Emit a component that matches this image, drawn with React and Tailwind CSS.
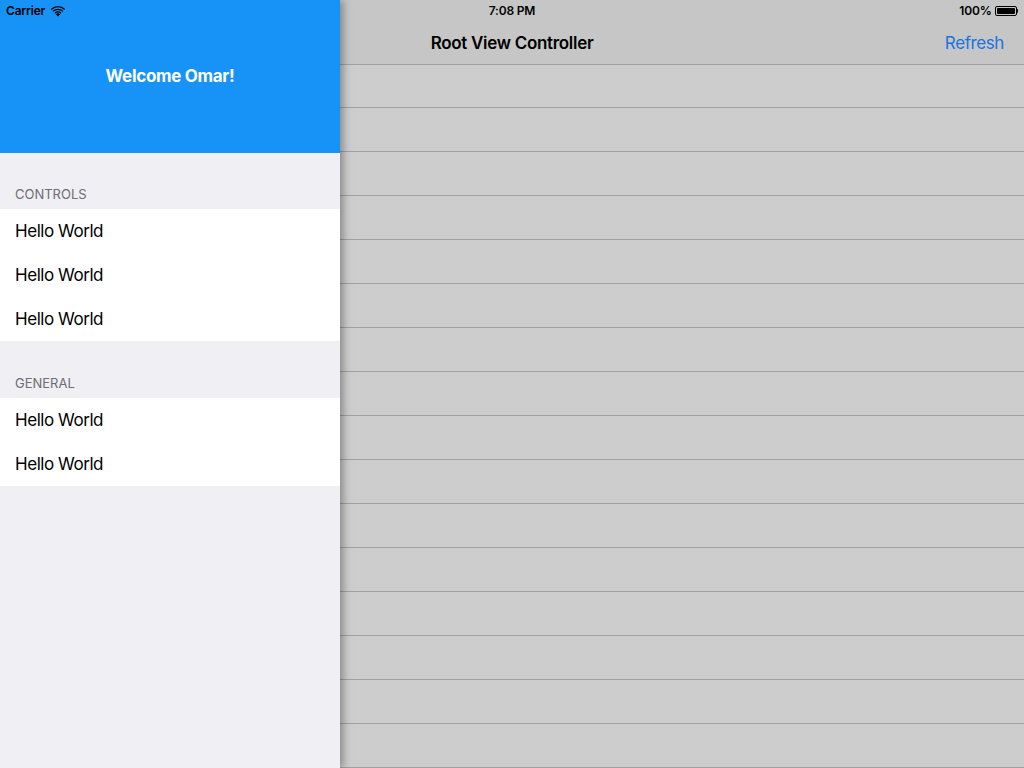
import React from 'react';

// Side drawer over a plain table view, iPad style
const font = { fontFamily: 'Inter, "Noto Sans", "Liberation Sans", sans-serif' };

function WifiIcon() {
  return (
    <svg width="14" height="11" viewBox="0 0 14 11" className="block">
      <path d="M7 10.5 L4.9 8.3 A3 3 0 0 1 9.1 8.3 Z" fill="#000" />
      <path d="M3.5 6.8 A5 5 0 0 1 10.5 6.8 L9.6 7.7 A3.8 3.8 0 0 0 4.4 7.7 Z" fill="#000" />
      <path d="M1.6 4.9 A7.7 7.7 0 0 1 12.4 4.9 L11.5 5.8 A6.4 6.4 0 0 0 2.5 5.8 Z" fill="#000" />
      <path d="M-0.2 3 A10.3 10.3 0 0 1 14.2 3 L13.3 3.9 A9 9 0 0 0 0.7 3.9 Z" fill="#000" />
    </svg>
  );
}

function Battery() {
  return (
    <div className="flex items-center">
      <div className="w-[22px] h-[10px] rounded-[2px] border border-black p-[1px]">
        <div className="w-full h-full bg-black rounded-[1px]" />
      </div>
      <div className="w-[1.5px] h-[4px] bg-black rounded-r-sm" />
    </div>
  );
}

function StatusBar() {
  return (
    <div className="absolute top-0 left-0 right-0 h-[20px] z-20 flex items-center justify-between px-[6px] pt-[2px] text-[12px] font-semibold text-black tracking-[-0.2px]">
      <div className="flex items-center gap-[6px] w-[200px]">
        <span>Carrier</span>
        <WifiIcon />
      </div>
      <span>7:08 PM</span>
      <div className="flex items-center justify-end gap-[3px] w-[200px]">
        <span>100%</span>
        <Battery />
      </div>
    </div>
  );
}

function MainView() {
  const rows = Array.from({ length: 16 });
  return (
    <div className="w-full h-full bg-[#cdcdcd] flex flex-col">
      <div className="h-[65px] shrink-0 bg-[#c6c6c6] border-b border-[#a1a1a1] pt-[23px] flex items-center relative">
        <div className="flex-1 text-center text-[17px] font-semibold text-black tracking-[-0.3px]">Root View Controller</div>
        <div className="absolute right-[20px] top-[23px] h-[41px] flex items-center text-[17px] text-[#1a74dc] tracking-[-0.4px]">Refresh</div>
      </div>
      <div className="h-[43px] shrink-0 border-b border-[#a1a1a1]" />
      {rows.map((_, i) => (
        <div key={i} className="h-[44px] shrink-0 border-b border-[#a1a1a1]" />
      ))}
    </div>
  );
}

function Section({ title, items, gap }) {
  return (
    <div>
      <div className={`${gap} flex items-end px-[15px] pb-[5px] text-[13px] text-[#6d6d72] uppercase`}>{title}</div>
      <div className="bg-white">
        {items.map((t, i) => (
          <div key={i} className="h-[44px] flex items-center px-[15px] pt-[1px] text-[17px] text-black tracking-[-0.45px]">{t}</div>
        ))}
      </div>
    </div>
  );
}

function Drawer() {
  return (
    <div className="absolute left-0 top-0 bottom-0 w-[340px] bg-[#efeff4] z-10 shadow-[3px_0_8px_rgba(0,0,0,0.35)]">
      <div className="h-[153px] bg-[#1793f8] pt-[1px] flex items-center justify-center">
        <span className="text-white text-[17px] font-bold tracking-[-0.3px]">Welcome Omar!</span>
      </div>
      <Section title="Controls" items={['Hello World', 'Hello World', 'Hello World']} gap="h-[56px]" />
      <Section title="General" items={['Hello World', 'Hello World']} gap="h-[57px]" />
    </div>
  );
}

export default function App() {
  return (
    <div className="relative w-[1024px] h-[768px] overflow-hidden" style={font}>
      <MainView />
      <Drawer />
      <StatusBar />
    </div>
  );
}
